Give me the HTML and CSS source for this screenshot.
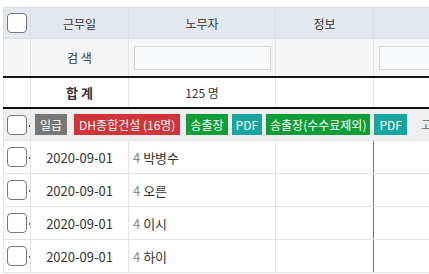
FILE: index.html
```html
<!DOCTYPE html>
<html>
<head>
    <title>근무 목록</title>
    <link rel="stylesheet" href="styles.css">
</head>
<body>
    <table class="grid">
        <colgroup>
            <col class="c-check">
            <col class="c-date">
            <col class="c-name">
            <col class="c-info">
            <col class="c-more">
        </colgroup>
        <thead>
            <tr class="head">
                <th><span class="check"></span></th>
                <th>근무일</th>
                <th>노무자</th>
                <th>정보</th>
                <th></th>
            </tr>
            <tr class="search">
                <td></td>
                <td>검 색</td>
                <td><input type="text" class="field"></td>
                <td></td>
                <td><input type="text" class="field"></td>
            </tr>
            <tr class="sum">
                <td></td>
                <td class="bold">합 계</td>
                <td>125 명</td>
                <td></td>
                <td></td>
            </tr>
        </thead>
        <tbody>
            <tr class="tools">
                <td><span class="check"></span><i class="dot"></i></td>
                <td colspan="4">
                    <div class="btns">
                        <span class="btn gray">일급</span>
                        <span class="btn red">DH종합건설 (16명)</span>
                        <span class="btn green">송출장</span>
                        <span class="btn teal">PDF</span>
                        <span class="btn green">송출장(수수료제외)</span>
                        <span class="btn teal last">PDF</span>
                        <span class="more">고</span>
                    </div>
                </td>
            </tr>
            <tr class="row">
                <td><span class="check"></span><i class="dot"></i></td>
                <td>2020-09-01</td>
                <td class="name"><span class="num">4</span> 박병수</td>
                <td class="info"></td>
                <td></td>
            </tr>
            <tr class="row">
                <td><span class="check"></span><i class="dot"></i></td>
                <td>2020-09-01</td>
                <td class="name"><span class="num">4</span> 오른</td>
                <td class="info"></td>
                <td></td>
            </tr>
            <tr class="row">
                <td><span class="check"></span><i class="dot"></i></td>
                <td>2020-09-01</td>
                <td class="name"><span class="num">4</span> 이시</td>
                <td class="info"></td>
                <td></td>
            </tr>
            <tr class="row">
                <td><span class="check"></span><i class="dot"></i></td>
                <td>2020-09-01</td>
                <td class="name"><span class="num">4</span> 하이</td>
                <td class="info"></td>
                <td></td>
            </tr>
        </tbody>
    </table>
</body>
</html>
```

FILE: styles.css
```css
body {
    margin: 7px 0 0 3px;
    overflow: hidden;
    background-color: white;
    font-family: "Noto Sans CJK KR", "Noto Sans", sans-serif;
    font-size: 12px;
    color: #333;
}
.grid {
    border-collapse: collapse;
    table-layout: fixed;
    width: 500px;
}
.c-check { width: 27px; }
.c-date { width: 98px; }
.c-name { width: 147px; }
.c-info { width: 98px; }
.c-more { width: 130px; }

th, td {
    border: 1px solid #e3e3e3;
    padding: 0;
    text-align: center;
    vertical-align: middle;
    position: relative;
}
.head th {
    height: 30px;
    background-color: #e3e9ee;
    border-color: #d9dfe4;
    font-weight: normal;
}
.search td {
    height: 37px;
    background-color: #f5f5f5;
    border-bottom: 2px solid #111;
}
.sum td {
    height: 29px;
    border-bottom: 2px solid #111;
}
.bold {
    font-weight: bold;
    font-size: 13px;
}
.field {
    box-sizing: border-box;
    width: 137px;
    height: 24px;
    margin: 0 4px 0 5px;
    display: block;
    border: 1px solid #d3d3d3;
    background-color: #f7f9fb;
}
.check {
    display: block;
    box-sizing: border-box;
    width: 20px;
    height: 20px;
    margin-left: 3px;
    border: 1px solid #777;
    border-radius: 4px;
    background-color: white;
}
.dot {
    position: absolute;
    right: 0;
    top: 50%;
    width: 1px;
    height: 2px;
    background-color: #555;
}
.tools td {
    height: 31px;
    background-color: #efefef;
}
.btns {
    display: flex;
    align-items: center;
    gap: 4px;
    padding-left: 4px;
    white-space: nowrap;
}
.btn {
    color: white;
    padding: 0 4px;
    height: 21px;
    line-height: 21px;
    font-size: 12px;
}
.gray { background-color: #777; margin-right: 3px; padding: 0 5px; }
.red { background-color: #d13438; margin-right: 2px; padding: 0 5px; }
.green { background-color: #0d9e38; }
.teal { background-color: #17a59e; }
.teal.last { padding: 0 5px; }
.more {
    color: #666;
    margin-left: 10px;
}
.row td {
    height: 32px;
    font-size: 13px;
}
.row .name {
    text-align: left;
    padding-left: 4px;
}
.num {
    color: #888;
}
.row .info {
    border-right: 1px solid #777;
}
```
